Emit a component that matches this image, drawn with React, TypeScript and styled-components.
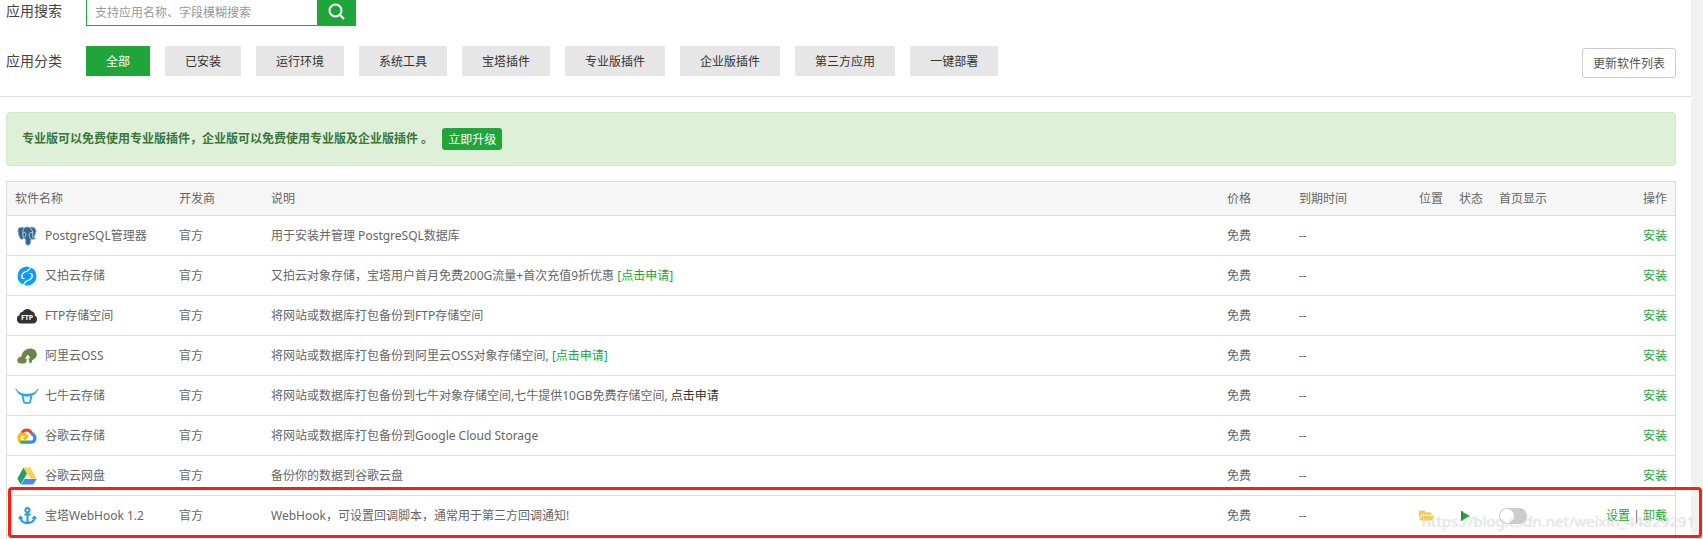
import React from "react";
import styled, { createGlobalStyle } from "styled-components";
import { FaAnchor, FaFolderOpen } from "react-icons/fa";

const GlobalStyle = createGlobalStyle`
  * { box-sizing: border-box; }
  body {
    margin: 0;
    background: #f1f1f1;
    color: #666;
    font-family: "Noto Sans", "Noto Sans CJK SC", sans-serif;
    font-size: 12px;
    line-height: 18px;
  }
  button, input { font: inherit; }
  a { text-decoration: none; }
`;

const Page = styled.main`
  margin-right: 12px;
  background: #fff;
`;

const Toolbar = styled.header`
  padding: 0 15px 18px 6px;
  border-bottom: 1px solid #ddd;
`;

const SearchRow = styled.form`
  display: flex;
  height: 26px;
  margin-bottom: 20px;
`;

const RowLabel = styled.span`
  width: 80px;
  flex: none;
  color: #444;
  font-size: 14px;
  line-height: 22px;
`;

const SearchInput = styled.input`
  width: 231px;
  padding: 0 8px;
  border: solid #20a53a;
  border-width: 0 0 1px 1px;
  border-radius: 0;
  outline: 0;
  color: #555;
  &::placeholder { color: #999; opacity: 1; }
`;

const SearchButton = styled.button`
  display: flex;
  justify-content: center;
  width: 39px;
  padding: 3px 0 0;
  border: 0;
  background: #20a53a;
`;

const CategoryRow = styled.div`
  display: flex;
  min-height: 32px;
`;

const CategoryLabel = styled(RowLabel)`
  line-height: 30px;
`;

const Categories = styled.nav`
  display: flex;
  flex: 1;
  align-self: flex-start;
  gap: 15px;
`;

const CategoryButton = styled.button<{ $active?: boolean }>`
  height: 30px;
  padding: 2px 20px 0;
  border: 0;
  background: ${(p) => (p.$active ? "#20a53a" : "#e6e6e6")};
  color: ${(p) => (p.$active ? "#fff" : "#333")};
  white-space: nowrap;
`;

const UpdateButton = styled.button`
  align-self: flex-end;
  height: 30px;
  padding: 2px 10px 0;
  border: 1px solid #ccc;
  border-radius: 3px;
  background: #fff;
  color: #555;
  white-space: nowrap;
`;

const Content = styled.section`
  padding: 15px 15px 0 6px;
`;

const Notice = styled.div`
  display: flex;
  align-items: center;
  gap: 9px;
  height: 54px;
  margin-bottom: 15px;
  padding: 0 15px;
  border: 1px solid #d6e9c6;
  border-radius: 4px;
  background: #dff0d8;
  color: #3c763d;
  font-weight: 600;
`;

const UpgradeButton = styled.button`
  height: 22px;
  padding: 1px 6px 0;
  border: 0;
  border-radius: 3px;
  background: #20a53a;
  color: #fff;
  font-weight: 400;
`;

const TablePanel = styled.div`
  position: relative;
  padding-bottom: 3px;
  border: solid #ddd;
  border-width: 1px 1px 0;
`;

const Table = styled.table`
  width: 100%;
  border-spacing: 0;
  table-layout: fixed;
`;

const HeadCell = styled.th<{ $width?: number; $right?: boolean }>`
  width: ${(p) => (p.$width ? `${p.$width}px` : "auto")};
  height: 34px;
  padding: 0 8px;
  border-bottom: 1px solid #ddd;
  background: #f6f6f6;
  font-weight: 400;
  text-align: ${(p) => (p.$right ? "right" : "left")};
  white-space: nowrap;
`;

const Cell = styled.td<{ $right?: boolean }>`
  height: 40px;
  padding: 0 8px;
  border-bottom: 1px solid #ddd;
  text-align: ${(p) => (p.$right ? "right" : "left")};
  white-space: nowrap;
`;

const SoftwareName = styled.div`
  display: flex;
  align-items: center;
  gap: 6px;
`;

const IconSlot = styled.span`
  display: flex;
  justify-content: center;
  width: 24px;
  flex: none;
`;

const Link = styled.a<{ $dark?: boolean }>`
  color: ${(p) => (p.$dark ? "#333" : "#20a53a")};
`;

const IconButton = styled.button`
  display: flex;
  padding: 0;
  border: 0;
  background: none;
`;

const Switch = styled.input`
  display: block;
  appearance: none;
  width: 28px;
  height: 16px;
  margin: 0;
  padding: 1px;
  border-radius: 8px;
  background: #ccc;
  &::before {
    content: "";
    display: block;
    width: 14px;
    height: 14px;
    border-radius: 7px;
    background: #fff;
  }
  &:checked { background: #20a53a; }
  &:checked::before { margin-left: auto; }
`;

const Highlight = styled.div`
  position: absolute;
  left: 1px;
  right: -27px;
  bottom: 1px;
  height: 51px;
  border: 3px solid #fe1d11;
  border-radius: 4px;
  pointer-events: none;
`;

const Watermark = styled.span`
  position: absolute;
  right: -20px;
  bottom: 6px;
  color: rgba(255, 255, 255, 0.6);
  font-size: 15px;
  line-height: 24px;
  text-shadow: 0 0 1px rgba(0, 0, 0, 0.25);
  white-space: nowrap;
  pointer-events: none;
`;

const SearchIcon = () => (
  <svg width="17" height="17" viewBox="0 0 17 17" fill="none" stroke="#fff" strokeWidth="2">
    <circle cx="7.5" cy="7.5" r="6" />
    <path d="M12 12l4 4" />
  </svg>
);

const PostgresIcon = () => (
  <svg width="20" height="20" viewBox="0 0 20 20" fill="none">
    <path
      d="M4 1.200C1.500 1.400.600 3 1.100 6c.5 3.300 1.600 6.700 3.100 7.300 1 .4 1.700-.3 2.300-1 .5.500 1.200.700 2 .7l.1 4c.1 1.600.9 2.300 2.300 2.200 1.800-.1 2.500-1.100 2.700-2.800l.4-3.300c1.800.5 3.700.2 4.700-.9-.4-.4-1.200-.3-2.200-.4 1.600-2.300 3-6 2.500-7.800C18.300 1.500 15.500.500 12.800 1.400 10.700.700 8.500.900 7.300 1.700 6.300 1.300 5.200 1.100 4 1.200z"
      fill="#336791"
      stroke="#9fb4c6"
      strokeWidth="1"
    />
    <path
      d="M7 2.200C5.500 4 5.800 7 5.900 9c.1 1.500.3 2.500.8 3.200M13 1.800c2 1.600 2.900 3.700 2.800 5.600 0 1.600-.6 2.300 0 4M6 7c1-.7 2.700-.6 2.900.600.2 1.500-.7 2.800-1.200 4M13.300 12.800c-.5-1.500-1.400-3.300-1.100-4.800.3-1.200 1.500-1.700 3.400-1.500"
      stroke="#dfe7ee"
      strokeWidth=".8"
    />
  </svg>
);

const UpyunIcon = () => (
  <svg width="20" height="20" viewBox="0 0 20 20" fill="none">
    <circle cx="10" cy="10" r="9.5" fill="#0a9dff" />
    <path
      d="M14.5.8C11.5 1.8 13 4 10 5.2 6.200 6.200 4.200 8.500 5 11.800M5.500 19.200C8.500 18.200 7 16 10 14.800c3.800-1 5.800-3.300 5-6.600"
      stroke="#fff"
      strokeWidth="1.300"
    />
    <path d="M5 9v3.500h2.500M15 11V7.500h-2.500" stroke="#fff" strokeWidth="1" />
  </svg>
);

const FtpIcon = () => (
  <svg width="20" height="16" viewBox="0 0 20 16">
    <path
      d="M4.500 15.500A4.300 4.300 0 0 1 2.500 7.200 3.200 3.200 0 0 1 5.400 4 5.300 5.300 0 0 1 14.600 3.200 4 4 0 0 1 17.800 7.600a4.200 4.200 0 0 1-2.300 7.900z"
      fill="#333"
    />
    <text x="10" y="12" textAnchor="middle" fontFamily="Noto Sans, sans-serif" fontSize="7" fontWeight="700" fill="#fff">
      FTP
    </text>
  </svg>
);

const AliyunIcon = () => (
  <svg width="20" height="16" viewBox="0 0 20 16">
    <path
      d="M3.800 15.500C1.500 15.500.200 14 .3 12.200.400 10.400 2 9 4.500 8.600 4.800 3.800 8.800.500 13.300.500c3.700 0 6.500 2.600 6.500 6 0 2.800-1.900 4.900-4.600 5.500.2 1.900-.8 3.500-2.900 3.500z"
      fill="#6b8548"
    />
    <path d="M10.600 6.500l3 3.800-2-.2c0 2 .6 3.500 1.400 4.900l-1 1H7.500c1.700-1.500 2.300-3.300 2.300-5.400l-1.900.5z" fill="#fff" />
  </svg>
);

const QiniuIcon = () => (
  <svg width="24" height="16" viewBox="0 0 24 16" fill="none" stroke="#2ca6e0">
    <path d="M.7.500C3.500 5 7.500 6 12 6S20.500 5 23.300.500C21.500 6.800 16.500 8.300 12 8.300S2.500 6.800.7.500z" fill="#2ca6e0" strokeWidth=".5" />
    <path d="M7.500 7.500l1.200 5.800c.2 1 .6 1.500 1.500 1.500h3.600c.9 0 1.300-.5 1.500-1.500l1.200-5.800" strokeWidth="1.800" />
  </svg>
);

const GoogleCloudIcon = () => (
  <svg width="20" height="16" viewBox="0 0 20 16" fill="none" strokeWidth="3.200">
    <path d="M5 5.400C6.500 1 12.800.600 14.800 5.800" stroke="#ea4335" />
    <path d="M14.200 5.600c4.600.900 5.300 8.200 0 8.500H10" stroke="#4285f4" />
    <path d="M10.500 14.100H5.600c-1.100 0-1.700-.2-2.300-.6" stroke="#34a853" />
    <path d="M3.500 13.500C.900 11.300 1.600 6.100 5.700 6.100c2 0 3.300 1 3.900 2.500l-3 2.600" stroke="#fbbc05" />
  </svg>
);

const GoogleDriveIcon = () => (
  <svg width="20" height="18" viewBox="0 0 20 18">
    <path d="M6.500.500L.3 11.800l3.500 5.700L10 6.500z" fill="#1fa463" />
    <path d="M6.800.500h6.400l6.400 11.100h-6.400z" fill="#ffd04b" />
    <path d="M7.500 12h12.200l-3.500 5.500H4.300z" fill="#4688f4" />
  </svg>
);

const PlayIcon = () => (
  <svg width="12" height="10" viewBox="0 0 12 10">
    <path d="M2 0l9 5-9 5z" fill="#20a53a" />
    <path d="M3 0v10" stroke="#12813a" strokeWidth="1" />
  </svg>
);

const categories = ["全部", "已安装", "运行环境", "系统工具", "宝塔插件", "专业版插件", "企业版插件", "第三方应用", "一键部署"];

interface Software {
  name: string;
  icon: React.ReactNode;
  description: string;
  link?: string;
  darkLink?: boolean;
  installed?: boolean;
}

const software: Software[] = [
  { name: "PostgreSQL管理器", icon: <PostgresIcon />, description: "用于安装并管理 PostgreSQL数据库" },
  { name: "又拍云存储", icon: <UpyunIcon />, description: "又拍云对象存储，宝塔用户首月免费200G流量+首次充值9折优惠 ", link: "[点击申请]" },
  { name: "FTP存储空间", icon: <FtpIcon />, description: "将网站或数据库打包备份到FTP存储空间" },
  { name: "阿里云OSS", icon: <AliyunIcon />, description: "将网站或数据库打包备份到阿里云OSS对象存储空间, ", link: "[点击申请]" },
  { name: "七牛云存储", icon: <QiniuIcon />, description: "将网站或数据库打包备份到七牛对象存储空间,七牛提供10GB免费存储空间, ", link: "点击申请", darkLink: true },
  { name: "谷歌云存储", icon: <GoogleCloudIcon />, description: "将网站或数据库打包备份到Google Cloud Storage" },
  { name: "谷歌云网盘", icon: <GoogleDriveIcon />, description: "备份你的数据到谷歌云盘" },
  { name: "宝塔WebHook 1.2", icon: <FaAnchor size={19} color="#2a9ddb" />, description: "WebHook，可设置回调脚本，通常用于第三方回调通知!", installed: true },
];

function SoftwareRow({ item }: { item: Software }) {
  return (
    <tr>
      <Cell>
        <SoftwareName>
          <IconSlot>{item.icon}</IconSlot>
          {item.name}
        </SoftwareName>
      </Cell>
      <Cell>官方</Cell>
      <Cell>
        {item.description}
        {item.link && <Link href="#apply" $dark={item.darkLink}>{item.link}</Link>}
      </Cell>
      <Cell>免费</Cell>
      <Cell>--</Cell>
      <Cell>
        {item.installed && (
          <IconButton type="button" aria-label="打开目录">
            <FaFolderOpen size={15} color="#efcf5a" />
          </IconButton>
        )}
      </Cell>
      <Cell>
        {item.installed && (
          <IconButton type="button" aria-label="运行状态">
            <PlayIcon />
          </IconButton>
        )}
      </Cell>
      <Cell>{item.installed && <Switch type="checkbox" aria-label="首页显示" />}</Cell>
      <Cell $right>
        {item.installed ? (
          <>
            <Link href="#settings">设置</Link> | <Link href="#uninstall">卸载</Link>
          </>
        ) : (
          <Link href="#install">安装</Link>
        )}
      </Cell>
    </tr>
  );
}

export default function App() {
  return (
    <>
      <GlobalStyle />
      <Page>
        <Toolbar>
          <SearchRow onSubmit={(e) => e.preventDefault()}>
            <RowLabel as="label" htmlFor="search">应用搜索</RowLabel>
            <SearchInput id="search" type="text" placeholder="支持应用名称、字段模糊搜索" />
            <SearchButton type="submit" aria-label="搜索">
              <SearchIcon />
            </SearchButton>
          </SearchRow>
          <CategoryRow>
            <CategoryLabel>应用分类</CategoryLabel>
            <Categories>
              {categories.map((name, i) => (
                <CategoryButton key={name} type="button" $active={i === 0}>{name}</CategoryButton>
              ))}
            </Categories>
            <UpdateButton type="button">更新软件列表</UpdateButton>
          </CategoryRow>
        </Toolbar>
        <Content>
          <Notice>
            <span>专业版可以免费使用专业版插件，企业版可以免费使用专业版及企业版插件 。</span>
            <UpgradeButton type="button">立即升级</UpgradeButton>
          </Notice>
          <TablePanel>
            <Table>
              <thead>
                <tr>
                  <HeadCell $width={164}>软件名称</HeadCell>
                  <HeadCell $width={92}>开发商</HeadCell>
                  <HeadCell>说明</HeadCell>
                  <HeadCell $width={72}>价格</HeadCell>
                  <HeadCell $width={120}>到期时间</HeadCell>
                  <HeadCell $width={40}>位置</HeadCell>
                  <HeadCell $width={40}>状态</HeadCell>
                  <HeadCell $width={92}>首页显示</HeadCell>
                  <HeadCell $width={92} $right>操作</HeadCell>
                </tr>
              </thead>
              <tbody>
                {software.map((item) => (
                  <SoftwareRow key={item.name} item={item} />
                ))}
              </tbody>
            </Table>
            <Highlight />
            <Watermark>https://blog.csdn.net/weixin_44829291</Watermark>
          </TablePanel>
        </Content>
      </Page>
    </>
  );
}
